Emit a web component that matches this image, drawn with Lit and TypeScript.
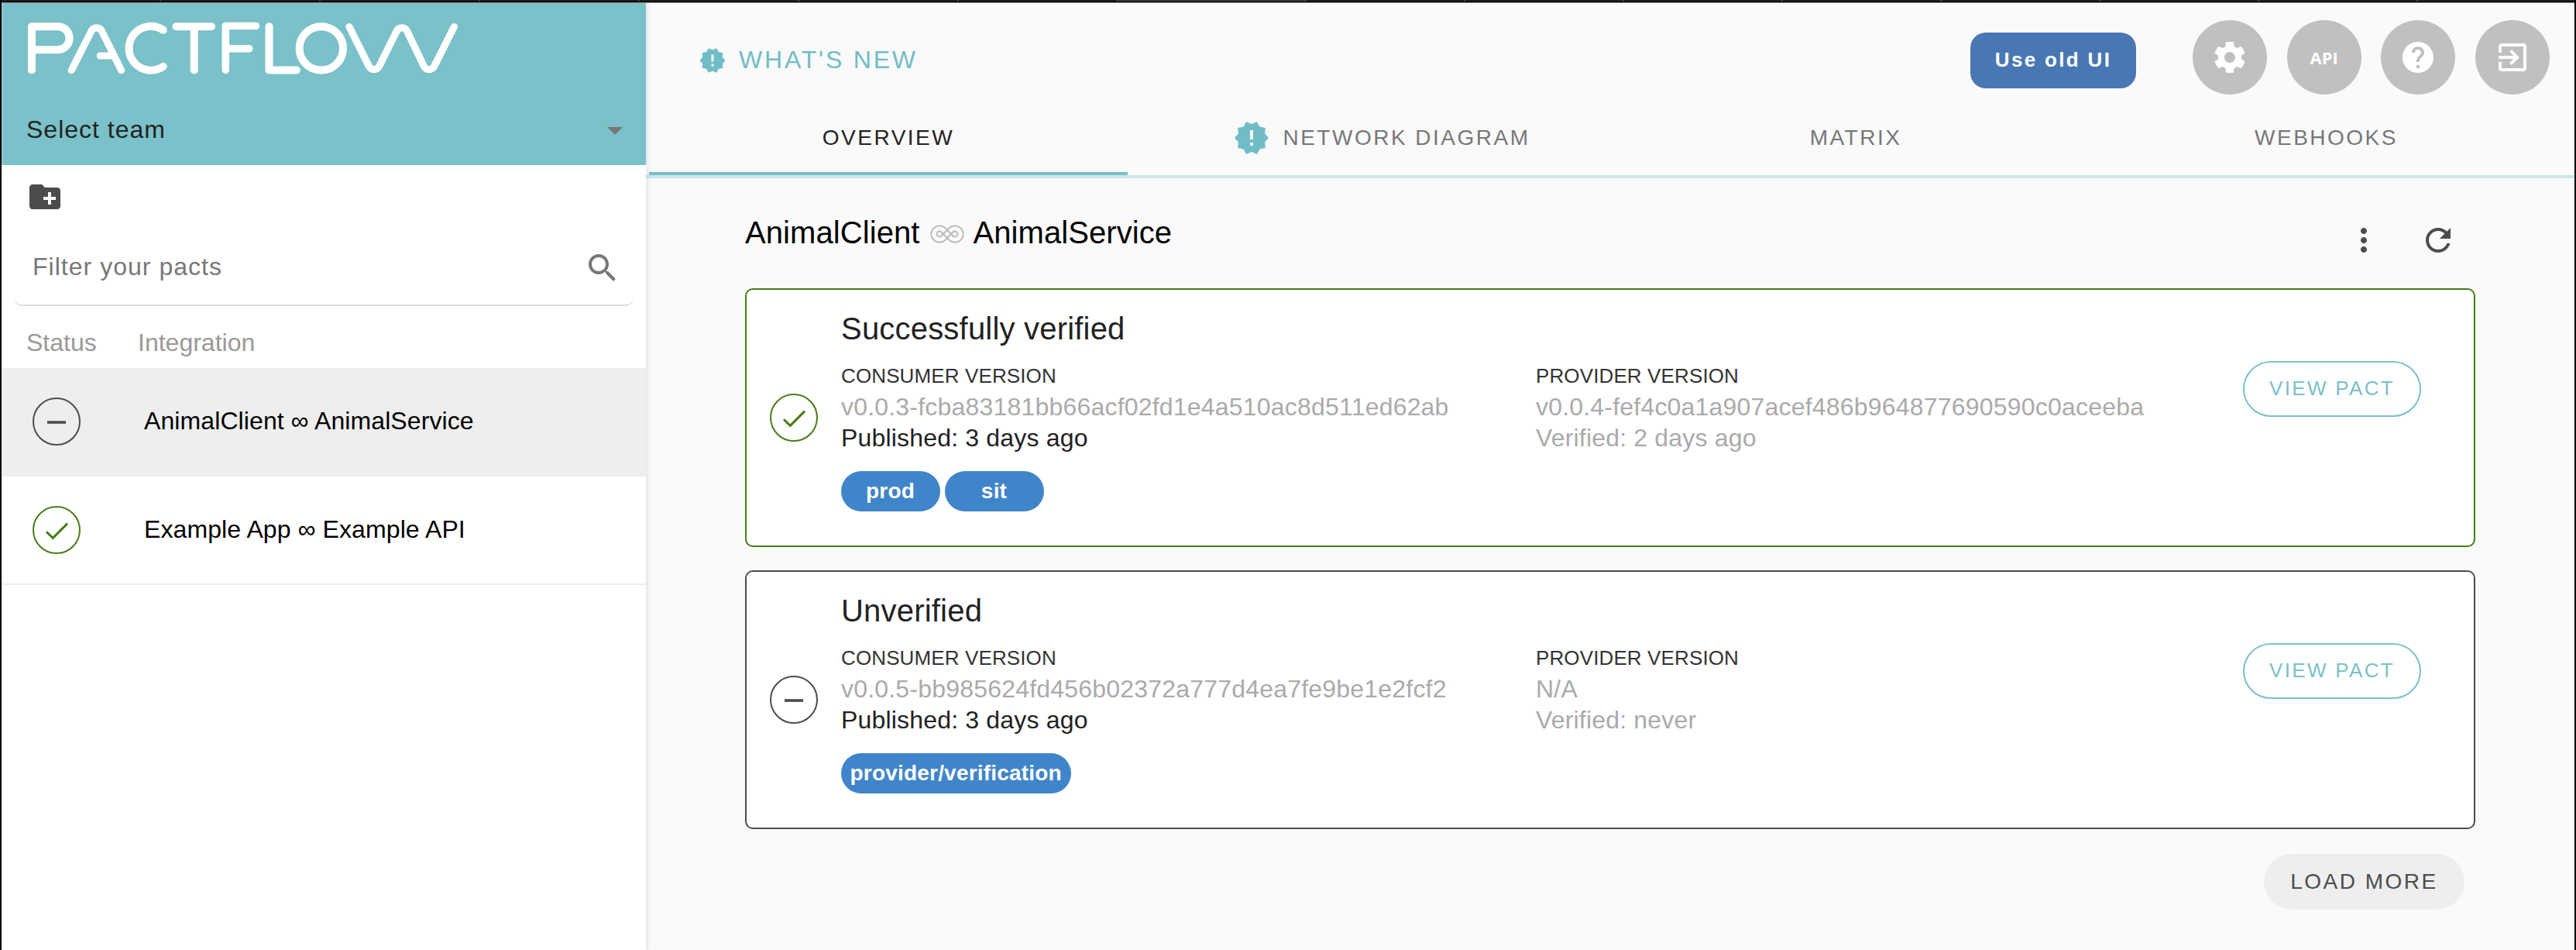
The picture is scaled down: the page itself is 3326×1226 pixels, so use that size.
import { LitElement, html, css, svg, nothing } from "lit";
import { customElement, property } from "lit/decorators.js";
import { classMap } from "lit/directives/class-map.js";

const ICONS: Record<string, string> = {
  release:
    "M23 12l-2.44-2.78.34-3.68-3.61-.82-1.89-3.18L12 3 8.6 1.54 6.71 4.72l-3.61.81.34 3.68L1 12l2.44 2.78-.34 3.69 3.61.82 1.89 3.18L12 21l3.4 1.46 1.89-3.18 3.61-.82-.34-3.68L23 12zm-10 5h-2v-2h2v2zm0-4h-2V7h2v6z",
  folder:
    "M20 6h-8l-2-2H4c-1.11 0-1.99.89-1.99 2L2 18c0 1.11.89 2 2 2h16c1.11 0 2-.89 2-2V8c0-1.11-.89-2-2-2zm-1 8h-3v3h-2v-3h-3v-2h3V9h2v3h3v2z",
  search:
    "M15.5 14h-.79l-.28-.27C15.41 12.59 16 11.11 16 9.5 16 5.91 13.09 3 9.5 3S3 5.91 3 9.5 5.91 16 9.5 16c1.61 0 3.09-.59 4.23-1.57l.27.28v.79l5 4.99L20.49 19l-4.99-5zm-6 0C7.01 14 5 11.99 5 9.5S7.01 5 9.5 5 14 7.01 14 9.5 11.99 14 9.5 14z",
  drop: "M7 9.5l5 5 5-5z",
  gear:
    "M19.43 12.98c.04-.32.07-.64.07-.98s-.03-.66-.07-.98l2.11-1.65c.19-.15.24-.42.12-.64l-2-3.46c-.12-.22-.39-.3-.61-.22l-2.49 1c-.52-.4-1.08-.73-1.69-.98l-.38-2.65C14.46 2.18 14.25 2 14 2h-4c-.25 0-.46.18-.49.42l-.38 2.65c-.61.25-1.17.59-1.69.98l-2.49-1c-.23-.09-.49 0-.61.22l-2 3.46c-.13.22-.07.49.12.64l2.11 1.65c-.04.32-.07.65-.07.98s.03.66.07.98l-2.11 1.65c-.19.15-.24.42-.12.64l2 3.46c.12.22.39.3.61.22l2.49-1c.52.4 1.08.73 1.69.98l.38 2.65c.03.24.24.42.49.42h4c.25 0 .46-.18.49-.42l.38-2.65c.61-.25 1.17-.59 1.69-.98l2.49 1c.23.09.49 0 .61-.22l2-3.46c.12-.22.07-.49-.12-.64l-2.11-1.65zM12 15.5c-1.93 0-3.5-1.57-3.5-3.5s1.57-3.5 3.5-3.5 3.5 1.57 3.5 3.5-1.57 3.5-3.5 3.5z",
  help:
    "M12 2C6.48 2 2 6.48 2 12s4.48 10 10 10 10-4.48 10-10S17.52 2 12 2zm1 17h-2v-2h2v2zm2.07-7.75l-.9.92C13.45 12.9 13 13.5 13 15h-2v-.5c0-1.1.45-2.1 1.17-2.83l1.24-1.26c.37-.36.59-.86.59-1.41 0-1.1-.9-2-2-2s-2 .9-2 2H8c0-2.21 1.79-4 4-4s4 1.79 4 4c0 .88-.36 1.68-.93 2.25z",
  exit:
    "M10.09 15.59L11.5 17l5-5-5-5-1.41 1.41L12.67 11H3v2h9.67l-2.58 2.59zM19 3H5c-1.11 0-2 .9-2 2v4h2V5h14v14H5v-4H3v4c0 1.1.89 2 2 2h14c1.1 0 2-.9 2-2V5c0-1.1-.9-2-2-2z",
  more:
    "M12 8c1.1 0 2-.9 2-2s-.9-2-2-2-2 .9-2 2 .9 2 2 2zm0 2c-1.1 0-2 .9-2 2s.9 2 2 2 2-.9 2-2-.9-2-2-2zm0 6c-1.1 0-2 .9-2 2s.9 2 2 2 2-.9 2-2-.9-2-2-2z",
  refresh:
    "M17.65 6.35C16.2 4.9 14.21 4 12 4c-4.42 0-7.99 3.58-7.99 8s3.57 8 7.99 8c3.73 0 6.84-2.55 7.73-6h-2.08c-.82 2.33-3.04 4-5.65 4-3.31 0-6-2.69-6-6s2.69-6 6-6c1.66 0 3.14.69 4.22 1.78L13 11h7V4l-2.35 2.35z",
};

@customElement("md-icon")
class MdIcon extends LitElement {
  @property() name = "";
  static styles = css`
    :host { display: block; width: 48px; height: 48px; flex: none; }
    svg { display: block; width: 100%; height: 100%; fill: currentColor; }
  `;
  render() {
    return html`<svg viewBox="0 0 24 24"><path d=${ICONS[this.name]}></path></svg>`;
  }
}

@customElement("status-badge")
class StatusBadge extends LitElement {
  @property({ type: Boolean }) ok = false;
  static styles = css`
    :host { display: block; width: 62px; height: 62px; flex: none; }
    svg { display: block; fill: none; stroke: #4c4c4c; }
    .ok { stroke: #467d16; }
  `;
  render() {
    return html`<svg class=${classMap({ ok: this.ok })} width="62" height="62" viewBox="0 0 62 62">
      <circle cx="31" cy="31" r="30" stroke-width="2"></circle>
      ${this.ok
        ? svg`<path d="M18 33.2 L26.3 41.3 L45 22.6" stroke-width="3"></path>`
        : svg`<path d="M19 32 H43" stroke-width="3.6"></path>`}
    </svg>`;
  }
}

interface Version { version: string; when: string; }
interface Pact { title: string; ok: boolean; consumer: Version; provider: Version; tags: string[]; }

const PACTS: Pact[] = [
  {
    title: "Successfully verified",
    ok: true,
    consumer: { version: "v0.0.3-fcba83181bb66acf02fd1e4a510ac8d511ed62ab", when: "Published: 3 days ago" },
    provider: { version: "v0.0.4-fef4c0a1a907acef486b964877690590c0aceeba", when: "Verified: 2 days ago" },
    tags: ["prod", "sit"],
  },
  {
    title: "Unverified",
    ok: false,
    consumer: { version: "v0.0.5-bb985624fd456b02372a777d4ea7fe9be1e2fcf2", when: "Published: 3 days ago" },
    provider: { version: "N/A", when: "Verified: never" },
    tags: ["provider/verification"],
  },
];

@customElement("pact-card")
class PactCard extends LitElement {
  @property({ attribute: false }) pact!: Pact;
  static styles = css`
    :host { display: block; }
    .card {
      box-sizing: border-box; height: 334px; border: 2px solid #4c4c4c; border-radius: 10px;
      background: #fff; display: grid; grid-template-columns: 92px 897px 1fr auto;
      padding: 0 68px 0 30px; color: #222; font-size: 32px; line-height: 40px; letter-spacing: 0.18px;
    }
    .card.ok { border-color: #467d16; }
    .badge { padding-top: 134px; }
    .title { font-size: 40px; line-height: 48px; margin-top: 26px; letter-spacing: 0.2px; }
    .label { font-size: 26px; line-height: 40px; margin-top: 17px; color: #333; letter-spacing: 0.12px; }
    .provider { padding-top: 74px; }
    .version, .muted { color: #aaa; }
    .version { letter-spacing: 0.2px; }
    .tags { display: flex; gap: 6px; margin-top: 23px; margin-left: -0.5px; }
    .tag {
      box-sizing: border-box; min-width: 128px; height: 52px; border-radius: 26px; padding: 0 12px;
      background: #4085c9; color: #fff; font-size: 28px; font-weight: 700; line-height: 51px;
      text-align: center; letter-spacing: 0.2px;
    }
    .view {
      box-sizing: border-box; width: 230px; height: 72px; margin-top: 92px; border: 2px solid #7ac1c9;
      border-radius: 36px; background: transparent; color: #7ac1c9; font: inherit; font-size: 26px;
      line-height: 66px; padding: 0 0 2px; letter-spacing: 2.32px; text-align: center;
    }
  `;
  render() {
    const { title, ok, consumer, provider, tags } = this.pact;
    return html`<section class=${classMap({ card: true, ok })}>
      <div class="badge"><status-badge ?ok=${ok}></status-badge></div>
      <div>
        <div class="title">${title}</div>
        <div class="label">CONSUMER VERSION</div>
        <div class="version">${consumer.version}</div>
        <div>${consumer.when}</div>
        <div class="tags">${tags.map((t) => html`<span class="tag">${t}</span>`)}</div>
      </div>
      <div class="provider">
        <div class="label">PROVIDER VERSION</div>
        <div class="version">${provider.version}</div>
        <div class="muted">${provider.when}</div>
      </div>
      <button class="view">VIEW PACT</button>
    </section>`;
  }
}

@customElement("side-panel")
class SidePanel extends LitElement {
  static styles = css`
    :host {
      display: block; width: 832px; flex: none; background: #fff; position: relative; z-index: 1;
      box-shadow: 0 0 8px rgba(0, 0, 0, 0.16);
    }
    .head { box-sizing: border-box; height: 209px; background: #7ac1c9; box-shadow: inset 2px 0 rgba(255, 255, 255, 0.12); }
    .logo { display: block; fill: none; stroke: #fff; stroke-linecap: round; stroke-linejoin: round; }
    .team {
      display: flex; justify-content: space-between; align-items: center; height: 48px;
      margin: 39px 16px 0 32px; font-size: 32px; line-height: 48px; letter-spacing: 1px; color: #222;
    }
    .team md-icon { color: #777; margin-top: 4px; }
    .tools { height: 82px; padding: 17px 0 0 32px; box-sizing: border-box; color: #4c4c4c; }
    .filter {
      box-sizing: border-box; height: 100px; margin: 0 16px; padding: 2px 16px 2px 24px; border-radius: 10px;
      border-bottom: 2px solid #ddd; display: flex; align-items: center; justify-content: space-between;
      font-size: 32px; letter-spacing: 1.02px; color: #777;
    }
    .filter md-icon { margin-top: 4px; }
    .cols {
      display: grid; grid-template-columns: 144px 1fr; padding: 27px 0 0 32px; height: 80px;
      box-sizing: border-box; font-size: 32px; line-height: 40px; color: #999;
    }
    .row {
      box-sizing: border-box; height: 140px; display: flex; align-items: center; gap: 82px;
      padding: 0 0 0 40px; font-size: 32px; line-height: 40px; letter-spacing: 0.1px; color: #000;
      border-bottom: 2px solid #eee;
    }
    .row span { margin-top: -2px; }
    .row.selected { background: #eee; }
  `;
  render() {
    const rows = [
      { name: "AnimalClient ∞ AnimalService", ok: false, selected: true },
      { name: "Example App ∞ Example API", ok: true, selected: false },
    ];
    return html`
      <header class="head">
        <svg class="logo" width="620" height="100" viewBox="2 4 620 100" stroke-width="10">
          <path d="M41 90.5 V34.2 H74.7 A15 15 0 0 1 74.7 64.2 H41"></path>
          <path stroke-width="9.2" d="M92.3 90.7 L118 40 A7.5 7.5 0 0 1 131.4 40 L156.7 90.7 M129.3 72 H145"></path>
          <path d="M210.7 38.7 A28.4 28.4 0 1 0 210.7 85.9"></path>
          <path d="M227.5 34.2 H273 M250.7 34.2 V90.5"></path>
          <path stroke-width="9.6" d="M291.3 90.3 V33.5 H330.3 M291.3 62.8 H321.7"></path>
          <path d="M347.5 34.2 V90.6 H382.8"></path>
          <circle cx="414.8" cy="62.4" r="28.2"></circle>
          <path stroke-width="9.2" d="M451 34.5 L476.3 85.4 A7.5 7.5 0 0 0 489.7 85.4 L512.2 40 A7.5 7.5 0 0 1 525.5 40 L547.4 85.4 A7.5 7.5 0 0 0 560.8 85.4 L586.4 34.5"></path>
        </svg>
        <div class="team"><span>Select team</span><md-icon name="drop"></md-icon></div>
      </header>
      <div class="tools"><md-icon name="folder"></md-icon></div>
      <div class="filter"><span>Filter your pacts</span><md-icon name="search"></md-icon></div>
      <div class="cols"><span>Status</span><span>Integration</span></div>
      ${rows.map(
        (r) => html`<div class=${classMap({ row: true, selected: r.selected })}>
          <status-badge ?ok=${r.ok}></status-badge><span>${r.name}</span>
        </div>`
      )}
    `;
  }
}

@customElement("app-root")
class AppRoot extends LitElement {
  static styles = css`
    :host {
      display: flex; flex-direction: column; height: 1226px; box-sizing: border-box; overflow: hidden;
      background: #fafafa; font-family: "Liberation Sans", Arial, sans-serif;
      border-left: 2px solid #000; border-right: 2px solid #000;
    }
    .strip {
      height: 2px; flex: none; background: #1c1c1c; border-bottom: 1px solid #000; display: flex;
      box-shadow: 0 1px #999; margin-bottom: 1px;
    }
    .strip span { box-sizing: border-box; width: 206px; flex: none; border-right: 2px solid #444; }
    .strip .current { width: 243px; background: #333; }
    .strip .current ~ span { width: 205px; }
    .body { display: flex; flex: 1; min-height: 0; }
    main { flex: 1; min-width: 0; }
    .top { display: flex; align-items: flex-start; height: 130px; padding-left: 68px; padding-right: 32px; box-sizing: border-box; }
    .news {
      display: flex; align-items: center; gap: 16px; margin-top: 56px; height: 36px;
      font-size: 32px; line-height: 34px; letter-spacing: 2.8px; color: #70bdc7;
    }
    .news md-icon { width: 36px; height: 36px; }
    .news span { margin-top: -2px; }
    .old {
      margin: 38px 73px 0 auto; width: 214px; height: 72px; border: 0; border-radius: 20px; padding: 0 0 2px;
      background: #4977b4; color: #fff; font: inherit; font-weight: 700; font-size: 26px; letter-spacing: 2.32px;
    }
    .round {
      width: 96px; height: 96px; margin-top: 22px; border-radius: 50%; background: #c0c0c0; color: #fff;
      display: flex; align-items: center; justify-content: center; flex: none;
      font-family: "Open Sans", "Noto Sans", sans-serif; font-weight: 700; font-size: 22px;
    }
    .round + .round { margin-left: 25.67px; }
    .tabs {
      display: grid; grid-template-columns: 618px 656px 568px 1fr; height: 96px; box-sizing: border-box;
      padding-left: 4px; border-bottom: 4px solid #cae8ea;
    }
    .tab {
      display: flex; align-items: center; justify-content: center; gap: 16px; box-sizing: border-box;
      border-bottom: 4px solid transparent; font-size: 28px; line-height: 34px; letter-spacing: 2.5px; color: #777;
    }
    .tab:last-child { padding-left: 3px; }
    .tab md-icon { color: #70bdc7; }
    .tab.active { color: #222; border-color: #7ac1c9; }
    .content { padding: 56px 128px 0 128px; }
    .heading { display: flex; height: 86px; align-items: flex-start; font-size: 40px; line-height: 48px; letter-spacing: 0.08px; color: #000; }
    .heading .name { margin-top: -10px; }
    .inf { margin: 4px 12px 0 13px; fill: none; stroke: #b8b8b8; stroke-width: 1.8; }
    .menu { margin-left: auto; height: 48px; display: flex; gap: 48px; color: #4c4c4c; padding-right: 24px; }
    .cards { display: grid; gap: 30px; }
    .foot { display: flex; justify-content: flex-end; padding: 32px 14px 0 0; }
    .load {
      width: 259px; height: 72px; border: 0; border-radius: 36px; background: #eee; color: #4c4c4c;
      font: inherit; font-size: 28px; letter-spacing: 2.5px; padding: 0;
    }
  `;
  render() {
    const tabs = ["OVERVIEW", "NETWORK DIAGRAM", "MATRIX", "WEBHOOKS"];
    return html`
      <div class="strip">
        ${Array.from({ length: 16 }, (_, i) => html`<span class=${classMap({ current: i === 7 })}></span>`)}
      </div>
      <div class="body">
        <side-panel></side-panel>
        <main>
          <div class="top">
            <div class="news"><md-icon name="release"></md-icon><span>WHAT'S NEW</span></div>
            <button class="old">Use old UI</button>
            <div class="round"><md-icon name="gear"></md-icon></div>
            <div class="round"><span>API</span></div>
            <div class="round"><md-icon name="help"></md-icon></div>
            <div class="round"><md-icon name="exit"></md-icon></div>
          </div>
          <nav class="tabs">
            ${tabs.map(
              (t, i) => html`<div class=${classMap({ tab: true, active: i === 0 })}>
                ${i === 1 ? html`<md-icon name="release"></md-icon>` : nothing}<span>${t}</span>
              </div>`
            )}
          </nav>
          <div class="content">
            <div class="heading">
              <span class="name">AnimalClient</span>
              <svg class="inf" width="44" height="24" viewBox="0 0 44 24">
                <path d="M19.6 4.4 L29.5 14.5 A3.5 3.5 0 1 0 29.5 9.5 L19.6 19.6 A10.7 10.7 0 1 1 19.6 4.4Z"></path>
                <path d="M24.4 4.4 L14.5 14.5 A3.5 3.5 0 1 1 14.5 9.5 L24.4 19.6 A10.7 10.7 0 1 0 24.4 4.4Z"></path>
              </svg>
              <span class="name">AnimalService</span>
              <div class="menu"><md-icon name="more"></md-icon><md-icon name="refresh"></md-icon></div>
            </div>
            <div class="cards">${PACTS.map((p) => html`<pact-card .pact=${p}></pact-card>`)}</div>
            <div class="foot"><button class="load">LOAD MORE</button></div>
          </div>
        </main>
      </div>
    `;
  }
}
